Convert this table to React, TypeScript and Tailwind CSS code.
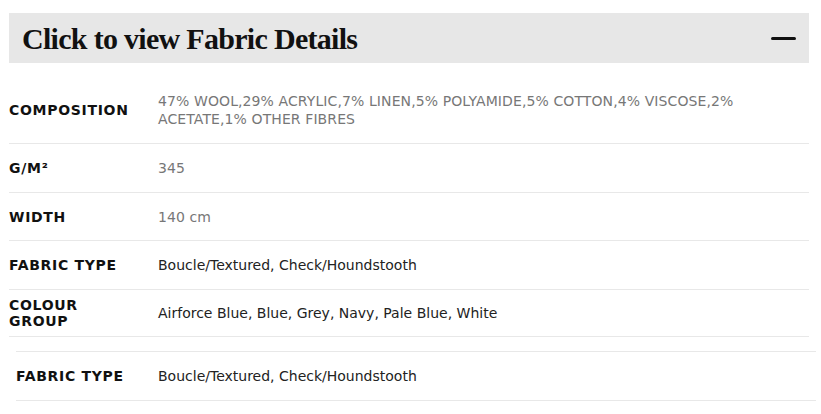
import React from 'react';

const rows = [
  { label: 'COMPOSITION', value: '47% WOOL,29% ACRYLIC,7% LINEN,5% POLYAMIDE,5% COTTON,4% VISCOSE,2% ACETATE,1% OTHER FIBRES', muted: true, h: 'h-[66px]' },
  { label: 'G/M²', value: '345', muted: true, h: 'h-[49px]' },
  { label: 'WIDTH', value: '140 cm', muted: true, h: 'h-[48px]' },
  { label: 'FABRIC TYPE', value: 'Boucle/Textured, Check/Houndstooth', muted: false, h: 'h-[49px]' },
  { label: 'COLOUR\nGROUP', value: 'Airforce Blue, Blue, Grey, Navy, Pale Blue, White', muted: false, h: 'h-[48px]' },
];

export default function App() {
  return (
    <div className="w-[821px] h-[414px] bg-white pt-[13px] overflow-hidden font-['DejaVu_Sans',sans-serif]">
      <div className="ml-[9px] w-[800px] h-[50px] bg-[#e7e7e7] flex items-center justify-between pl-[13px] pr-[13px]">
        <h2 className="font-['Liberation_Serif',serif] text-[30px] font-bold text-[#111] tracking-[-0.7px]">
          Click to view Fabric Details
        </h2>
        <span className="block w-[25px] h-[3px] rounded-full bg-[#111]" />
      </div>

      <div className="ml-[9px] w-[800px] mt-[14px]">
        {rows.map((r, i) => (
          <div key={r.label} className={`flex items-center ${r.h} ${i > 0 ? 'border-t border-[#e8e8e8]' : ''} ${i === rows.length - 1 ? 'border-b border-[#e8e8e8]' : ''}`}>
            <div className="w-[149px] shrink-0 whitespace-pre-line text-[14px] font-bold leading-[16px] tracking-[0.7px] text-[#111] pr-4">{r.label}</div>
            <div className={`text-[14px] leading-[18px] ${r.muted ? 'text-[#777] tracking-[0.1px]' : 'text-[#222]'}`}>{r.value}</div>
          </div>
        ))}
      </div>

      <div className="ml-[16px] w-[800px] mt-[14px] border-y border-[#e8e8e8] h-[50px] flex items-center">
        <div className="w-[142px] shrink-0 text-[14px] font-bold leading-[16px] tracking-[0.7px] text-[#111]">FABRIC TYPE</div>
        <div className="text-[14px] leading-[18px] text-[#222]">Boucle/Textured, Check/Houndstooth</div>
      </div>
    </div>
  );
}
